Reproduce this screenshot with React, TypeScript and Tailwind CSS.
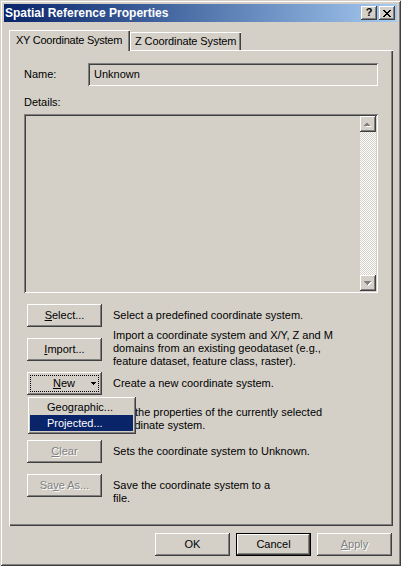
import React from "react";

const raised =
  "shadow-[inset_-1px_-1px_#404040,inset_1px_1px_#ffffff,inset_-2px_-2px_#808080,inset_2px_2px_#d4d0c8]";
const sunken =
  "shadow-[inset_1px_1px_#808080,inset_-1px_-1px_#ffffff,inset_2px_2px_#404040,inset_-2px_-2px_#d4d0c8]";
const disabledText = "text-[#808080] [text-shadow:1px_1px_0_#ffffff]";

function Btn({
  children,
  disabled,
  className = "",
}: {
  children?: React.ReactNode;
  disabled?: boolean;
  className?: string;
}) {
  return (
    <div
      className={`relative w-[75px] h-[23px] shrink-0 bg-[#d4d0c8] flex items-center justify-center leading-[13px] ${raised} ${
        disabled ? disabledText : ""
      } ${className}`}
    >
      {children}
    </div>
  );
}

function Arrow({ up }: { up?: boolean }) {
  return (
    <svg width="8" height="5" viewBox="0 0 8 5" shapeRendering="crispEdges">
      {up ? (
        <>
          <path d="M4 2h1v1h1v1h1v1H2V4h1V3h1z" fill="#ffffff" />
          <path d="M3 1h1v1h1v1h1v1H0V3h1V2h1V1z" fill="#808080" />
        </>
      ) : (
        <>
          <path d="M1 1h7v1H7v1H6v1H5v1H4V4H3V3H2V2H1z" fill="#ffffff" />
          <path d="M0 0h7v1H6v1H5v1H4v1H3V3H2V2H1V1H0z" fill="#808080" />
        </>
      )}
    </svg>
  );
}

function Row({
  button,
  text,
  align = "center",
  textClass = "",
  children,
}: {
  button: React.ReactNode;
  text: React.ReactNode;
  align?: "center" | "start";
  textClass?: string;
  children?: React.ReactNode;
}) {
  return (
    <div
      className={`relative flex h-[23px] gap-[11px] ${
        align === "center" ? "items-center" : "items-start"
      }`}
    >
      {button}
      <div className={`leading-[13px] whitespace-nowrap ${textClass}`}>{text}</div>
      {children}
    </div>
  );
}

export default function App() {
  return (
    <div className="w-[401px] h-[566px] bg-[#d4d0c8] flex flex-col p-[4px] font-['Liberation_Sans',Arial,sans-serif] text-[11px] text-black shadow-[inset_1px_1px_#d4d0c8,inset_-1px_-1px_#404040,inset_2px_2px_#ffffff,inset_-2px_-2px_#808080] overflow-hidden">
      {/* Title bar */}
      <div className="h-[18px] flex items-center bg-linear-to-r from-[#0a246a] to-[#a6caf0] pl-[1px] pr-[2px]">
        <span className="text-white font-bold text-[12px] leading-none">
          Spatial Reference Properties
        </span>
        <div className="ml-auto flex gap-[2px]">
          <div
            className={`w-[16px] h-[14px] bg-[#d4d0c8] ${raised} flex items-center justify-center font-bold text-[11px] leading-none pb-[1px]`}
          >
            ?
          </div>
          <div
            className={`w-[16px] h-[14px] bg-[#d4d0c8] ${raised} flex items-center justify-center`}
          >
            <svg width="8" height="7" viewBox="0 0 8 7" shapeRendering="crispEdges">
              <path
                d="M0 0h2v1h1v1h2V1h1V0h2v1H7v1H6v1H5v1h1v1h1v1h1v1H6V6H5V5H3v1H2v1H0V6h1V5h1V4h1V3H2V2H1V1H0z"
                fill="#000000"
              />
            </svg>
          </div>
        </div>
      </div>

      {/* Tabs */}
      <div className="mt-[8px] ml-[5px] h-[20px] flex items-end">
        <div className="relative z-10 w-[121px] h-[21px] -mb-[1px] bg-[#d4d0c8] shadow-[inset_1px_1px_#ffffff,inset_-1px_0_#404040,inset_-2px_0_#808080] pl-[7px] pt-[4px] leading-[13px] tracking-[-0.25px] whitespace-nowrap">
          XY Coordinate System
        </div>
        <div className="w-[111px] h-[18px] bg-[#d4d0c8] shadow-[inset_1px_1px_#ffffff,inset_-1px_0_#404040,inset_-2px_0_#808080] pl-[5px] pt-[3px] leading-[13px] tracking-[-0.1px] whitespace-nowrap">
          Z Coordinate System
        </div>
      </div>

      {/* Panel */}
      <div className="ml-[5px] w-[384px] h-[476px] shadow-[inset_1px_1px_#ffffff,inset_-1px_-1px_#404040,inset_-2px_-2px_#808080] pt-[13px] pl-[15px] flex flex-col">
        <div className="flex items-center h-[23px]">
          <div className="w-[64px] leading-[13px]">Name:</div>
          <div className={`w-[290px] h-[23px] ${sunken} flex items-center pl-[6px] leading-[13px]`}>
            Unknown
          </div>
        </div>

        <div className="mt-[10px] leading-[13px]">Details:</div>

        <div className={`mt-[5px] w-[354px] h-[179px] ${sunken} p-[2px] flex justify-end`}>
          <div className="w-[16px] h-full flex flex-col">
            <div className={`w-[16px] h-[16px] bg-[#d4d0c8] ${raised} flex items-center justify-center`}>
              <Arrow up />
            </div>
            <div className="flex-1 bg-[image:repeating-conic-gradient(#ffffff_0_25%,#d4d0c8_0_50%)] bg-[length:2px_2px]" />
            <div className={`w-[16px] h-[16px] bg-[#d4d0c8] ${raised} flex items-center justify-center`}>
              <Arrow />
            </div>
          </div>
        </div>

        <div className="mt-[11px] ml-[3px] flex flex-col gap-[11px]">
          <Row
            button={
              <Btn>
                <span>
                  <span className="underline underline-offset-[1px]">S</span>elect...
                </span>
              </Btn>
            }
            text="Select a predefined coordinate system."
          />
          <Row
            button={
              <Btn>
                <span>
                  <span className="underline underline-offset-[1px]">I</span>mport...
                </span>
              </Btn>
            }
            text={
              <>
                Import a coordinate system and X/Y, Z and M
                <br />
                domains from an existing geodataset (e.g.,
                <br />
                feature dataset, feature class, raster).
              </>
            }
            textClass="-mt-[2px]"
          />
          <Row
            button={
              <Btn>
                <div className="absolute inset-[3px] border border-dotted border-black" />
                <span className="pr-[1px]">
                  <span className="underline underline-offset-[1px]">N</span>ew
                </span>
                <svg
                  className="absolute right-[6px] top-[10px]"
                  width="5"
                  height="3"
                  viewBox="0 0 5 3"
                  shapeRendering="crispEdges"
                >
                  <path d="M0 0h5v1H4v1H3v1H2V2H1V1H0z" fill="#000000" />
                </svg>
              </Btn>
            }
            text="Create a new coordinate system."
          >
            <div className="absolute left-0 top-[24px] z-20 w-[109px] h-[38px] bg-[#d4d0c8] shadow-[inset_1px_1px_#d4d0c8,inset_-1px_-1px_#404040,inset_2px_2px_#ffffff,inset_-2px_-2px_#808080] p-[3px] flex flex-col">
              <div className="h-[16px] flex items-center pl-[17px] leading-[13px]">
                Geographic...
              </div>
              <div className="h-[16px] flex items-center pl-[17px] leading-[13px] bg-[#0a246a] text-white">
                Projected...
              </div>
            </div>
          </Row>
          <Row
            button={<Btn />}
            text={
              <>
                Edit the properties of the currently selected
                <br />
                coordinate system.
              </>
            }
            textClass="mt-[3px]"
          />
          <Row
            button={
              <Btn disabled>
                <span>
                  <span className="underline underline-offset-[1px]">C</span>lear
                </span>
              </Btn>
            }
            text="Sets the coordinate system to Unknown."
          />
          <Row
            align="start"
            button={
              <Btn disabled>
                <span>
                  Sa<span className="underline underline-offset-[1px]">v</span>e As...
                </span>
              </Btn>
            }
            text={
              <>
                Save the coordinate system to a
                <br />
                file.
              </>
            }
            textClass="mt-[5px]"
          />
        </div>
      </div>

      {/* Bottom buttons */}
      <div className="mt-[7px] ml-[5px] w-[384px] flex justify-end gap-[6px] pr-[1px]">
        <Btn>OK</Btn>
        <div className="w-[75px] h-[23px] border border-black">
          <div
            className={`w-full h-full bg-[#d4d0c8] flex items-center justify-center leading-[13px] ${raised}`}
          >
            Cancel
          </div>
        </div>
        <Btn disabled>
          <span>
            <span className="underline underline-offset-[1px]">A</span>pply
          </span>
        </Btn>
      </div>
    </div>
  );
}
